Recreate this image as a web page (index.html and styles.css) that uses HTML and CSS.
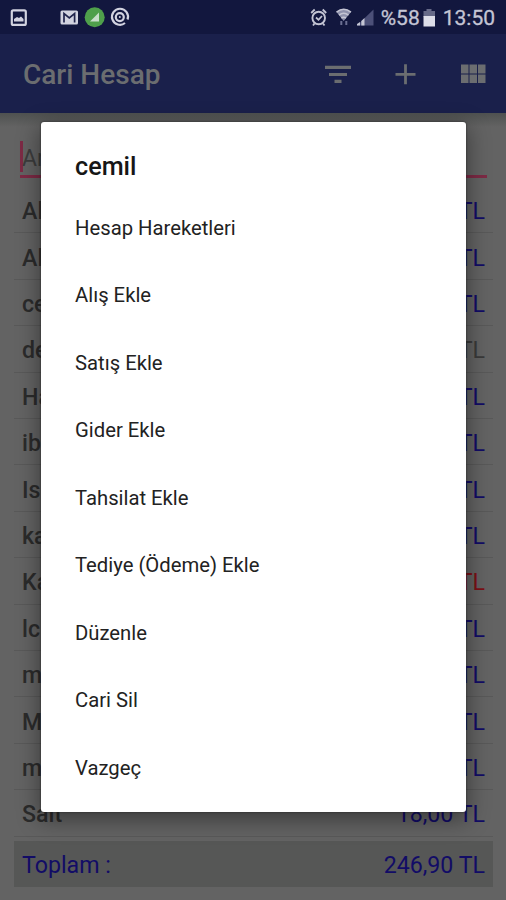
FILE: index.html
```html
<!DOCTYPE html>
<html lang="tr">
<head>
  <meta charset="UTF-8">
  <title>Cari Hesap</title>
  <link rel="stylesheet" href="styles.css">
</head>
<body>
  <div class="statusbar">
    <svg width="150" height="34" viewBox="0 0 150 34">
      <rect x="11.800" y="10.300" width="14" height="14.600" rx="1.500" fill="none" stroke="#d2d3e0" stroke-width="2.200"/>
      <path d="M14 21.500v-2.500l3-2 2 1 2-1.500 2.500 2.500v2.500z" fill="#d2d3e0"/>
      <rect x="60.500" y="10.500" width="17.500" height="14" rx="1.500" fill="#d2d3e0"/>
      <path d="M64 22.500V13.500l5.300 4.500 5.300-4.500v9" fill="none" stroke="#20244c" stroke-width="1.700"/>
      <circle cx="94.700" cy="17.300" r="10" fill="#4fa04b"/>
      <path d="M90 21.500h9v-9z" fill="#c9dfcb"/>
      <path d="M125 23A8 8 0 1 1 127.500 19.500" fill="none" stroke="#d2d3e0" stroke-width="2.200"/>
      <circle cx="119.800" cy="17.100" r="4" fill="none" stroke="#d2d3e0" stroke-width="2.200"/>
      <circle cx="119.800" cy="17.100" r="1" fill="#d2d3e0"/>
    </svg>
    <div class="status-right">
      <svg width="70" height="34" viewBox="0 0 70 34">
        <circle cx="9.700" cy="18" r="6.300" fill="none" stroke="#c4c5d4" stroke-width="1.900"/>
        <path d="M2.200 13l3.500-3.500M17.200 13l-3.500-3.500M5.500 23.500l-1.500 2M14 23.500l1.500 2M7 17.500l2.500 2.300 3.500-3.800" fill="none" stroke="#c4c5d4" stroke-width="1.800"/>
        <path d="M27.500 12Q34.500 6 42 12L34.700 21z" fill="#8f92ad"/>
        <path d="M27.500 12.200Q34.700 6.500 42 12.200M30 15.200Q34.700 11.500 39.500 15.200M32.300 18Q34.700 16.500 37 18" fill="none" stroke="#c4c5d4" stroke-width="1.500"/>
        <path d="M32.300 21v4M37.300 21v4" stroke="#6b6f92" stroke-width="2"/>
        <path d="M48 25.500L64.500 9.500v16z" fill="#4c5078"/>
        <path d="M48 25.500v-1.500l3-2v3.500zM52.300 25.500v-4.500l3.200-3v7.500z" fill="#c4c5d4"/>
      </svg>
      <span class="percent">%58</span>
      <svg class="battery" width="13" height="34" viewBox="0 0 13 34">
        <path d="M3.500 9h5v2H12v6H.5v-6h3z" fill="#666a88"/>
        <path d="M.5 16H12v10.500H.5z" fill="#dcdde8"/>
      </svg>
      <span class="clock">13:50</span>
    </div>
  </div>

  <div class="toolbar">
    <h1>Cari Hesap</h1>
    <svg width="166" height="40" viewBox="0 0 166 40">
      <path d="M0 13.300h26M4 20.500h18M9.500 27.300h7" stroke="#6b6d70" stroke-width="3.200"/>
      <path d="M70.500 20.300h20M80.500 10.300v20" stroke="#6b6d70" stroke-width="2.800"/>
      <path d="M136 10.500h7.500v9H136zM144.500 10.500h7.500v9h-7.500zM153 10.500h7.500v9H153zM136 20.500h7.500v8.500H136zM144.500 20.500h7.500v8.500h-7.500zM153 20.500h7.500v8.500H153z" fill="#6b6d70"/>
    </svg>
  </div>

  <div class="content">
    <div class="search"><span>Ar</span></div>
    <div class="list">
      <div class="row"><b>Al</b><span>TL</span></div>
      <div class="row"><b>Al</b><span>TL</span></div>
      <div class="row"><b>ce</b><span>TL</span></div>
      <div class="row"><b>de</b><span class="zero">TL</span></div>
      <div class="row"><b>Ha</b><span>TL</span></div>
      <div class="row"><b>ib</b><span>TL</span></div>
      <div class="row"><b>Is</b><span>TL</span></div>
      <div class="row"><b>ka</b><span>TL</span></div>
      <div class="row"><b>Ka</b><span class="debt">TL</span></div>
      <div class="row"><b>lc</b><span>TL</span></div>
      <div class="row"><b>m</b><span>TL</span></div>
      <div class="row"><b>M</b><span>TL</span></div>
      <div class="row"><b>m</b><span>TL</span></div>
      <div class="row"><b>Sait</b><span>18,00 TL</span></div>
    </div>
    <div class="total"><span>Toplam :</span><span>246,90 TL</span></div>
  </div>

  <div class="dialog">
    <h2>cemil</h2>
    <ul>
      <li>Hesap Hareketleri</li>
      <li>Alış Ekle</li>
      <li>Satış Ekle</li>
      <li>Gider Ekle</li>
      <li>Tahsilat Ekle</li>
      <li>Tediye (Ödeme) Ekle</li>
      <li>Düzenle</li>
      <li>Cari Sil</li>
      <li>Vazgeç</li>
    </ul>
  </div>
</body>
</html>
```
FILE: styles.css
```css
* { box-sizing: border-box; }
body {
  margin: 0;
  height: 900px;
  overflow: hidden;
  background: #636363;
  font-family: Roboto, "Noto Sans", sans-serif;
}
svg { display: block; flex: none; }
.statusbar {
  height: 34px;
  background: #12173e;
  display: flex;
  justify-content: space-between;
}
.status-right {
  display: flex;
  align-items: center;
  padding-right: 11px;
  color: #c4c5d4;
  font-size: 21px;
  line-height: 34px;
}
.percent, .clock { padding-top: 2px; -webkit-text-stroke: 0.3px; }
.percent { margin-left: 2px; }
.battery { margin: 0 7px 0 3px; }
.toolbar {
  height: 79px;
  padding: 0 15px 0 23px;
  background: #1a204b;
  display: flex;
  align-items: center;
  justify-content: space-between;
}
.toolbar h1 {
  margin: 2px 0 0;
  font-size: 28px;
  font-weight: 500;
  color: #6b6d70;
}
.content {
  padding: 0 13px 0 14px;
  background: linear-gradient(#4e5150, #636363 14px);
}
.search {
  height: 65px;
  margin: 0 6px;
  padding-top: 28px;
  border-bottom: 3px solid #7d2a45;
}
.search span {
  display: block;
  height: 31px;
  border-left: 3px solid #7d2a45;
  font-size: 23px;
  line-height: 35px;
  text-indent: -1px;
  color: #3c3c3c;
}
.list { padding-top: 9px; }
.row {
  height: 46.42px;
  padding: 3px 8px 0;
  border-bottom: 1px solid #595959;
  display: flex;
  align-items: center;
  justify-content: space-between;
  font-size: 23.2px;
}
.row b { font-weight: 500; color: #2b2b2b; }
.row span { color: #120c66; }
.row .zero { color: #3a3a3a; }
.row .debt { color: #7c1016; }
.total {
  height: 46px;
  margin-top: 4px;
  padding: 3px 8px 0;
  background: #565756;
  display: flex;
  align-items: center;
  justify-content: space-between;
  font-size: 23.2px;
  color: #120c66;
}
/* menu over the list */
.dialog {
  position: absolute;
  left: 41px;
  top: 122px;
  width: 425px;
  height: 690px;
  padding: 28px 34px 0;
  background: #fff;
  border-radius: 3px;
  box-shadow: 0 0 2px #222, 0 6px 22px 2px rgba(0,0,0,0.4);
}
.dialog h2 {
  margin: 0;
  font-size: 25.2px;
  line-height: 34px;
  font-weight: 500;
  color: #161616;
}
.dialog ul {
  margin: 10.6px 0 0;
  padding: 0;
  list-style: none;
}
.dialog li {
  height: 67.5px;
  line-height: 67.5px;
  font-size: 20.25px;
  color: #222;
}
```
